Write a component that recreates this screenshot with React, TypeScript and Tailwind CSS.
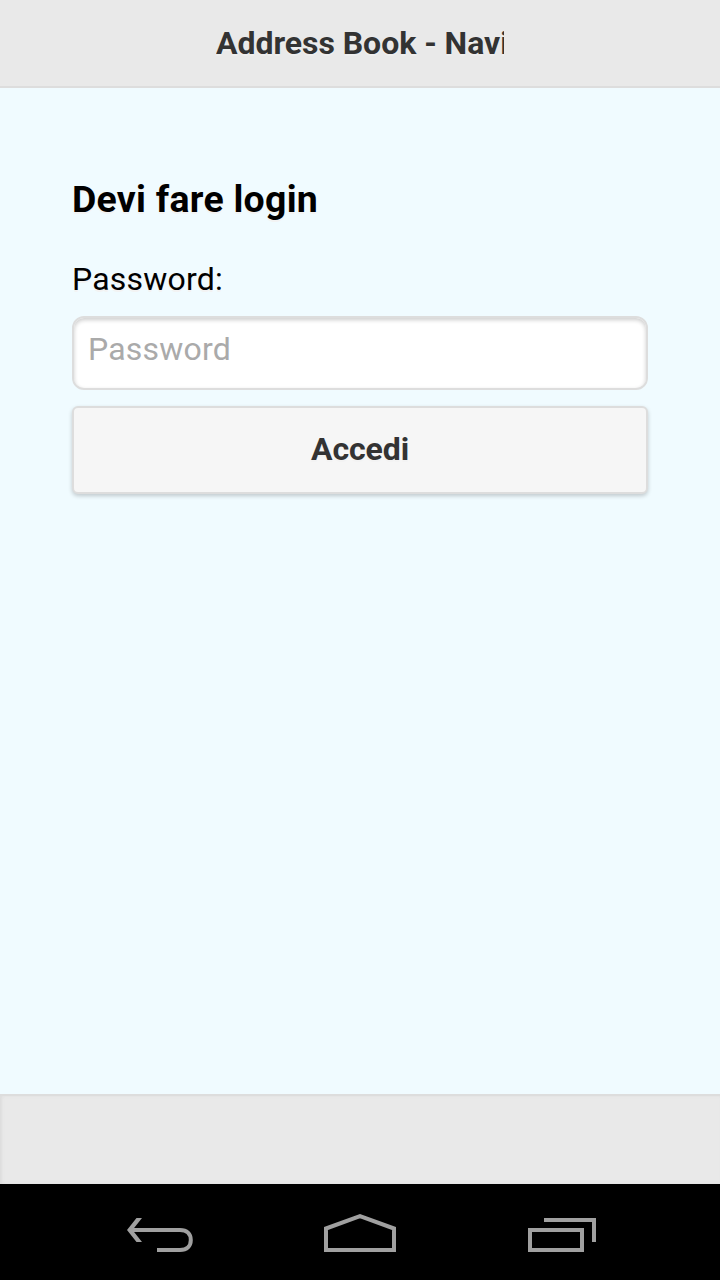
import { useState } from "react";

function NavBar() {
  return (
    <nav className="flex h-24 shrink-0 bg-black px-[106px] text-[#a0a0a0]">
      <div className="flex w-full justify-between">
        <button type="button" aria-label="Back">
          <svg width="104" height="96" viewBox="0 0 104 96" fill="none" stroke="currentColor" strokeWidth="4">
            <path d="M51 66h23c7 0 10.8-4 10.8-10S81 46 74 46H24" />
            <path d="M21 46l9.5-12H36l-9.5 12L36 58h-5.5z" fill="currentColor" stroke="none" />
          </svg>
        </button>
        <button type="button" aria-label="Home">
          <svg width="104" height="96" viewBox="0 0 104 96" fill="none" stroke="currentColor" strokeWidth="4">
            <path d="M18 66V44.5l34-12.3 34 12.3V66z" />
          </svg>
        </button>
        <button type="button" aria-label="Recent apps">
          <svg width="104" height="96" viewBox="0 0 104 96" fill="none" stroke="currentColor" strokeWidth="4">
            <path d="M20 46h52v20H20z" />
            <path d="M34 36h50v22" />
          </svg>
        </button>
      </div>
    </nav>
  );
}

export default function App() {
  const [password, setPassword] = useState("");

  return (
    <div className="flex h-[1280px] w-[720px] flex-col overflow-hidden bg-[#f0fbff] font-['Roboto',sans-serif] text-[32px] text-black">
      {/* Header */}
      <header className="h-[88px] shrink-0 border-b-2 border-[#dddddd] bg-[#e9e9e9]">
        <h1 className="mx-auto w-[288px] overflow-hidden pt-[22px] leading-[42px] font-bold tracking-[-0.04px] whitespace-nowrap text-[#333333] [text-shadow:0_2px_0_#eeeeee]">
          Address Book - Navigazione
        </h1>
      </header>

      {/* Login */}
      <main className="flex-1 px-[72px] pt-[87px] [text-shadow:0_2px_0_#f3f3f3]">
        <h3 className="text-[37.44px] leading-[48px] font-bold tracking-[0.27px]">Devi fare login</h3>
        <form onSubmit={(e) => e.preventDefault()}>
          <label htmlFor="password" className="mt-[35px] block leading-[42px] tracking-[0.2px]">
            Password:
          </label>
          <input
            id="password"
            type="password"
            placeholder="Password"
            value={password}
            onChange={(e) => setPassword(e.target.value)}
            className="mt-4 block h-[74px] w-full rounded-xl border-2 border-[#dddddd] bg-white px-[14px] pb-2 tracking-[0.2px] shadow-[inset_0_2px_4px_rgba(0,0,0,0.2)] outline-none placeholder:text-[#aaaaaa] [text-shadow:none]"
          />
          <button
            type="submit"
            className="mt-4 block h-[88px] w-full rounded-md border-2 border-[#dddddd] bg-[#f6f6f6] pb-[3px] font-bold tracking-[-0.1px] text-[#333333] shadow-[0_2px_4px_rgba(0,0,0,0.2)] [text-shadow:0_2px_0_#f3f3f3]"
          >
            Accedi
          </button>
        </form>
      </main>

      {/* Footer */}
      <footer className="h-[90px] shrink-0 border-t-2 border-[#dddddd] bg-[#e9e9e9] shadow-[inset_2px_0_3px_#dddddd]" />
      <NavBar />
    </div>
  );
}
